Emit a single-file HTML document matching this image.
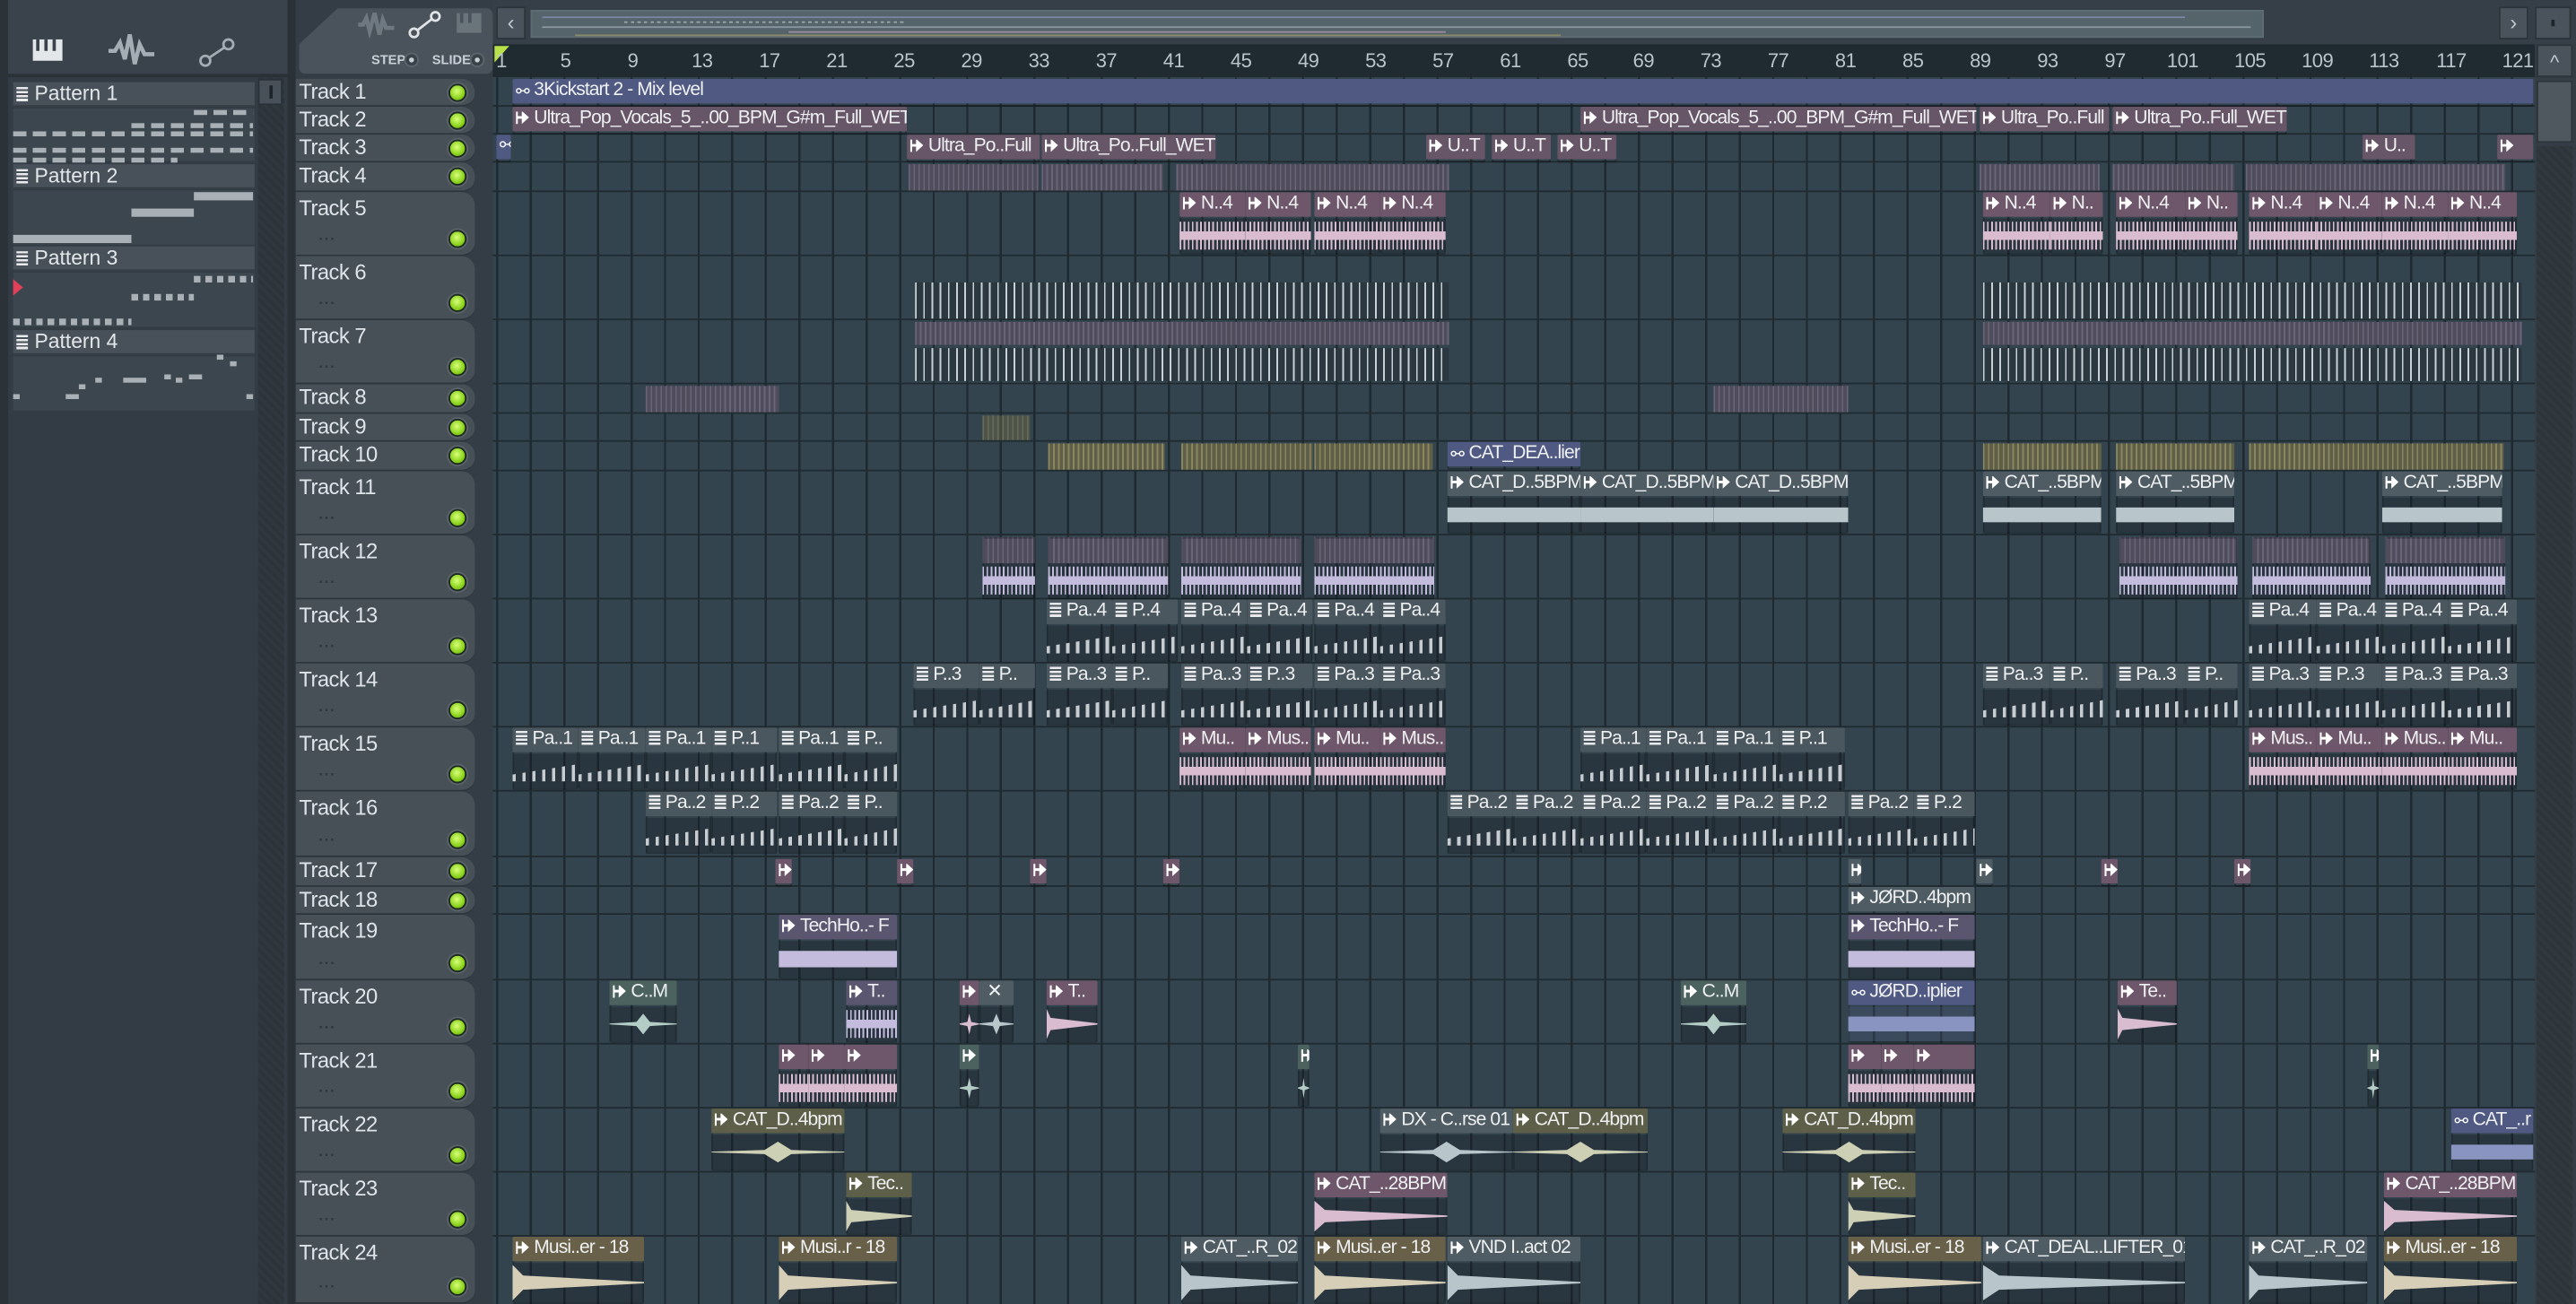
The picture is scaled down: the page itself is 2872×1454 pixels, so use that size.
<!DOCTYPE html>
<html><head><meta charset="utf-8">
<style>
*{margin:0;padding:0;box-sizing:border-box}
html,body{width:2872px;height:1454px;overflow:hidden;background:#343d45}
#w{position:absolute;left:0;top:0;width:1568px;height:794px;transform:scale(1.83163,1.8312);transform-origin:0 0;font-family:"Liberation Sans Narrow","Liberation Sans",sans-serif;background:#343d45;overflow:hidden}
.a{position:absolute}
#grid{position:absolute;left:300px;top:47px;width:1243px;height:747px;background:#33444e}
#vl{position:absolute;left:2px;top:0;right:0;bottom:0;background:repeating-linear-gradient(90deg,#1e2930 0 1.3px,transparent 1.3px 20.44px)}
.hl{position:absolute;left:300px;width:1243px;height:1px;background:#202a31}
.th{position:absolute;left:180px;width:109px;background:#474f57;border-radius:0 8px 8px 0;border-bottom:1px solid #2e363d;color:#dfe4e8;font-size:13px;letter-spacing:-0.3px;padding-left:2px;line-height:15px}
.th .led{position:absolute;right:5px;width:11px;height:11px;border-radius:50%;background:radial-gradient(circle at 45% 40%,#d8ff7a,#8ad21c 60%,#5a9a10);border:1.5px solid #1f2a20;box-shadow:0 0 0 1px #5b646b}
.th.s .led{top:3px}
.th.t .led{bottom:4px}
.th.t::after{content:"...";position:absolute;left:14px;bottom:2px;font-size:9px;color:#2e363c;letter-spacing:1px;font-weight:bold}
.c{position:absolute;overflow:hidden;border-radius:1px;--h:#4d5a62;--w:#b5c3c8;box-shadow:inset 0 0 0 1px rgba(0,0,0,.25)}
.c i{display:block;height:15px;background:var(--h);color:#eef0f2;font-style:normal;font-size:11.5px;letter-spacing:-0.5px;line-height:15px;white-space:nowrap;padding-left:2px;overflow:hidden}
.c i::before{content:"";display:inline-block;width:8px;height:8px;margin-right:3px;background:#fff;vertical-align:-0.5px;clip-path:polygon(0 0,15% 0,15% 40%,45% 40%,45% 0,100% 50%,45% 100%,45% 60%,15% 60%,15% 100%,0 100%)}
.c.p i::before{width:7px;height:9px;background:repeating-linear-gradient(#e8eaec 0 1.4px,transparent 1.4px 2.4px);clip-path:none;vertical-align:-1px}
.c.au i::before{content:"⚯";background:none;clip-path:none;width:10px;height:auto;font-size:10px;margin-right:1px;color:#fff}
.c.n i::before{content:none}
.c b{position:absolute;left:0;right:0;top:16px;bottom:1px;background:rgba(22,30,36,.35)}
.c b::after{content:"";position:absolute;left:0;right:0;top:28%;bottom:28%;background:var(--w)}
.c.d b::after{top:5%;bottom:5%;clip-path:polygon(0 0,8% 30%,100% 48%,100% 52%,8% 70%,0 100%)}
.c.sp b::after{top:10%;bottom:10%;background:linear-gradient(transparent 35%,var(--w) 35% 65%,transparent 65%),repeating-linear-gradient(90deg,var(--w) 0 1px,transparent 1px 2.5px)}
.c.m b::after{top:20%;bottom:20%;clip-path:polygon(0 48%,40% 40%,50% 0,60% 40%,100% 48%,100% 52%,60% 60%,50% 100%,40% 60%,0 52%)}
.c.s{height:17px}
.c.t{height:38px}
.blue{--h:#4f5982;--w:#8a94c0}
.pur{--h:#665668;--w:#9d8aa0}
.pink{--h:#6f576b;--w:#d9bcd0}
.grey{--h:#4f5c63;--w:#b8c6cb}
.pat{--h:#4b575f;--w:#c0c8cc}
.olive{--h:#5d5f48;--w:#cdd0b4}
.brown{--h:#686048;--w:#d6ceb6}
.gg{--h:#4c625e;--w:#b4ccc6}
.lil{--h:#5a5670;--w:#c4bcdc}
.pat b::after{top:30%;bottom:20%;background:repeating-linear-gradient(90deg,#c6ccd0 0 2px,transparent 2px 6px);clip-path:polygon(0 60%,100% 0,100% 100%,0 100%)}
.bar{position:absolute;height:16px}
.stp{background:repeating-linear-gradient(90deg,#6a6478 0 1px,#4f4d5c 1px 3px)}
.ylw{background:repeating-linear-gradient(90deg,#8a8660 0 1px,#5f5f48 1px 3px)}
.spk{background:repeating-linear-gradient(90deg,#c8d0d6 0 1px,transparent 1px 5px),#2b3840}
.pl{position:absolute;left:8px;width:147px;background:#48515a;height:15px;color:#e3e7ea;font-size:12.5px;line-height:15px;padding-left:13px;border-bottom:1px solid #363e45}
.pl::before{content:"";position:absolute;left:2px;top:3px;width:7px;height:9px;background:repeating-linear-gradient(#e8eaec 0 1.4px,transparent 1.4px 2.4px)}
.pv{position:absolute;left:8px;width:147px;background:#3c464e}
.nt{position:absolute;height:2.5px;background:#a9b1b7}
.rn{position:absolute;color:#b9c4cb;font-size:12px;top:30px;letter-spacing:-0.3px}
</style></head><body><div id="w">

<div class="a" style="left:0;top:0;width:176px;height:794px;background:#333c44"></div>
<div class="a" style="left:0;top:0;width:5px;height:794px;background:#2b3339"></div>
<div class="a" style="left:5px;top:0;width:170px;height:46px;background:#3a434b"></div>
<div class="a" style="left:5px;top:45px;width:170px;height:2px;background:#2a3238"></div>
<div class="a" style="left:20px;top:24px;width:18px;height:13px;background:#e4e7ea"></div>
<div class="a" style="left:22px;top:24px;width:2px;height:7px;background:#3a434b"></div>
<div class="a" style="left:27px;top:24px;width:2px;height:7px;background:#3a434b"></div>
<div class="a" style="left:32px;top:24px;width:2px;height:7px;background:#3a434b"></div>
<svg class="a" style="left:66px;top:20px" width="28" height="22"><path d="M0 11h4l3-5 3 10 3-15 3 18 3-12 3 6h6" stroke="#a4adb4" stroke-width="2.5" fill="none"/></svg>
<svg class="a" style="left:120px;top:22px" width="24" height="20"><circle cx="5" cy="15" r="3" stroke="#a4adb4" stroke-width="1.5" fill="none"/><circle cx="19" cy="5" r="3" stroke="#a4adb4" stroke-width="1.5" fill="none"/><path d="M7.5 13L16.5 7" stroke="#a4adb4" stroke-width="1.5"/></svg>

<div class="pl" style="top:50px">Pattern 1</div>
<div class="pv" style="top:66px;height:32px"></div>
<div class="nt" style="left:118px;top:67px;width:36px;background:repeating-linear-gradient(90deg,#a9b1b7 0 8px,transparent 8px 12px)"></div>
<div class="nt" style="left:80px;top:75px;width:74px;background:repeating-linear-gradient(90deg,#a9b1b7 0 8px,transparent 8px 12px)"></div>
<div class="nt" style="left:8px;top:80px;width:146px;background:repeating-linear-gradient(90deg,#a9b1b7 0 8px,transparent 8px 12px)"></div>
<div class="nt" style="left:8px;top:90px;width:146px;background:repeating-linear-gradient(90deg,#a9b1b7 0 8px,transparent 8px 12px)"></div>
<div class="nt" style="left:8px;top:96px;width:100px;background:repeating-linear-gradient(90deg,#a9b1b7 0 8px,transparent 8px 12px)"></div>
<div class="pl" style="top:100px">Pattern 2</div>
<div class="pv" style="top:116px;height:33px"></div>
<div class="nt" style="left:118px;top:117px;width:36px;height:5px"></div>
<div class="nt" style="left:80px;top:127px;width:38px;height:5px"></div>
<div class="nt" style="left:8px;top:143px;width:72px;height:5px"></div>
<div class="pl" style="top:150px">Pattern 3</div>
<div class="pv" style="top:166px;height:33px"></div>
<div class="nt" style="left:118px;top:168px;width:36px;height:4px;background:repeating-linear-gradient(90deg,#a9b1b7 0 4px,transparent 4px 7px)"></div>
<div class="nt" style="left:80px;top:179px;width:38px;height:4px;background:repeating-linear-gradient(90deg,#a9b1b7 0 4px,transparent 4px 7px)"></div>
<div class="nt" style="left:8px;top:194px;width:72px;height:4px;background:repeating-linear-gradient(90deg,#a9b1b7 0 4px,transparent 4px 7px)"></div>
<div class="a" style="left:8px;top:170px;width:0;height:0;border-left:6px solid #e0405a;border-top:5px solid transparent;border-bottom:5px solid transparent"></div>
<div class="pl" style="top:201px">Pattern 4</div>
<div class="pv" style="top:217px;height:33px"></div>
<div class="nt" style="left:132px;top:216px;width:4px;height:3px"></div>
<div class="nt" style="left:140px;top:220px;width:4px;height:3px"></div>
<div class="nt" style="left:100px;top:228px;width:4px;height:3px"></div>
<div class="nt" style="left:115px;top:228px;width:8px;height:3px"></div>
<div class="nt" style="left:58px;top:230px;width:4px;height:3px"></div>
<div class="nt" style="left:75px;top:230px;width:14px;height:3px"></div>
<div class="nt" style="left:107px;top:230px;width:4px;height:3px"></div>
<div class="nt" style="left:48px;top:234px;width:4px;height:3px"></div>
<div class="nt" style="left:8px;top:240px;width:4px;height:3px"></div>
<div class="nt" style="left:40px;top:240px;width:8px;height:3px"></div>
<div class="nt" style="left:150px;top:240px;width:4px;height:3px"></div>
<div class="a" style="left:157px;top:47px;width:16px;height:747px;background:repeating-linear-gradient(45deg,#2c343a 0 2px,#30383f 2px 4px)"></div>
<div class="a" style="left:157px;top:48px;width:15px;height:16px;background:#48515a;border:1px solid #2a3238"></div>
<div class="a" style="left:164px;top:52px;width:2px;height:8px;background:#1e252a"></div>
<div class="a" style="left:175px;top:0;width:5px;height:794px;background:#2a3238"></div>

<div class="a" style="left:180px;top:0;width:120px;height:47px;background:#343d45"></div>
<div class="a" style="left:182px;top:5px;width:118px;height:40px;background:#4a535b;clip-path:polygon(20% 0,100% 0,100% 100%,0 100%,0 55%);border-radius:4px"></div>
<svg class="a" style="left:218px;top:7px" width="22" height="16"><path d="M0 8h3l2-4 2 8 3-11 3 13 2-9 2 5h5" stroke="#6e787f" stroke-width="2.5" fill="none"/></svg>
<svg class="a" style="left:248px;top:6px" width="22" height="18"><circle cx="4" cy="14" r="2.6" stroke="#e0e4e7" stroke-width="1.5" fill="none"/><circle cx="17" cy="4" r="2.6" stroke="#e0e4e7" stroke-width="1.5" fill="none"/><path d="M6 12.5L15 5.5" stroke="#e0e4e7" stroke-width="1.5"/></svg>
<div class="a" style="left:278px;top:8px;width:15px;height:12px;background:#6a747b"></div>
<div class="a" style="left:280px;top:8px;width:2px;height:6px;background:#4a535b"></div>
<div class="a" style="left:285px;top:8px;width:2px;height:6px;background:#4a535b"></div>
<div class="a" style="left:226px;top:32px;color:#c8d0d6;font-size:8px;font-weight:bold">STEP</div>
<div class="a" style="left:246px;top:32px;width:9px;height:9px;border-radius:50%;background:#3a4249;border:1.5px solid #5c656c"></div>
<div class="a" style="left:249px;top:35px;width:3px;height:3px;border-radius:50%;background:#c8d0d6"></div>
<div class="a" style="left:263px;top:32px;color:#c8d0d6;font-size:8px;font-weight:bold">SLIDE</div>
<div class="a" style="left:286px;top:32px;width:9px;height:9px;border-radius:50%;background:#3a4249;border:1.5px solid #5c656c"></div>
<div class="a" style="left:289px;top:35px;width:3px;height:3px;border-radius:50%;background:#c8d0d6"></div>

<div class="a" style="left:300px;top:0;width:1268px;height:27px;background:#363f47"></div>
<div class="a" style="left:302px;top:4px;width:18px;height:20px;background:#4a535b;border:1px solid #2c343a;color:#c0c8ce;font-size:13px;text-align:center;line-height:18px">‹</div>
<div class="a" style="left:323px;top:6px;width:1055px;height:17px;background:#55636a;border:1px solid #5e6d74"></div>
<div class="a" style="left:330px;top:10px;width:1000px;height:1px;background:#7a86a8"></div>
<div class="a" style="left:380px;top:13px;width:170px;height:1px;background:repeating-linear-gradient(90deg,#9aa4aa 0 2px,transparent 2px 4px)"></div>
<div class="a" style="left:330px;top:16px;width:1040px;height:1px;background:#8a96a0"></div>
<div class="a" style="left:480px;top:19px;width:400px;height:1px;background:#9a8aa0"></div>
<div class="a" style="left:350px;top:21px;width:600px;height:1px;background:#8a8a68"></div>
<div class="a" style="left:1521px;top:4px;width:18px;height:20px;background:#4a535b;border:1px solid #2c343a;color:#c0c8ce;font-size:13px;text-align:center;line-height:18px">›</div>
<div class="a" style="left:1543px;top:4px;width:22px;height:20px;background:#4a535b;border:1px solid #2c343a"></div>
<div class="a" style="left:1553px;top:12px;width:2px;height:4px;background:#1e252a"></div>

<div class="a" style="left:300px;top:27px;width:1243px;height:20px;background:#1f2a31"></div>
<div class="a" style="left:301px;top:28px;width:0;height:0;border-top:10px solid #b8e04a;border-right:9px solid transparent"></div>
<div class="rn" style="left:302px">1</div>
<div class="rn" style="left:341px">5</div>
<div class="rn" style="left:382px">9</div>
<div class="rn" style="left:421px">13</div>
<div class="rn" style="left:462px">17</div>
<div class="rn" style="left:503px">21</div>
<div class="rn" style="left:544px">25</div>
<div class="rn" style="left:585px">29</div>
<div class="rn" style="left:626px">33</div>
<div class="rn" style="left:667px">37</div>
<div class="rn" style="left:708px">41</div>
<div class="rn" style="left:749px">45</div>
<div class="rn" style="left:790px">49</div>
<div class="rn" style="left:831px">53</div>
<div class="rn" style="left:872px">57</div>
<div class="rn" style="left:913px">61</div>
<div class="rn" style="left:954px">65</div>
<div class="rn" style="left:994px">69</div>
<div class="rn" style="left:1035px">73</div>
<div class="rn" style="left:1076px">77</div>
<div class="rn" style="left:1117px">81</div>
<div class="rn" style="left:1158px">85</div>
<div class="rn" style="left:1199px">89</div>
<div class="rn" style="left:1240px">93</div>
<div class="rn" style="left:1281px">97</div>
<div class="rn" style="left:1319px">101</div>
<div class="rn" style="left:1360px">105</div>
<div class="rn" style="left:1401px">109</div>
<div class="rn" style="left:1442px">113</div>
<div class="rn" style="left:1483px">117</div>
<div class="rn" style="left:1523px">121</div>

<div class="a" style="left:1543px;top:27px;width:25px;height:767px;background:#343d45"></div>
<div class="a" style="left:1544px;top:27px;width:22px;height:20px;background:#4a535b;border:1px solid #2c343a;color:#c0c8ce;font-size:12px;text-align:center;line-height:20px">^</div>
<div class="a" style="left:1544px;top:49px;width:22px;height:38px;background:#4f585f;border:1px solid #2c343a"></div>
<div class="a" style="left:1544px;top:89px;width:22px;height:705px;background:repeating-linear-gradient(45deg,#2d353b 0 2px,#31393f 2px 4px)"></div>

<div id="grid"><div id="vl"></div></div>
<div class="hl" style="top:64px"></div><div class="hl" style="top:81px"></div><div class="hl" style="top:98px"></div><div class="hl" style="top:116px"></div><div class="hl" style="top:155px"></div><div class="hl" style="top:194px"></div><div class="hl" style="top:233px"></div><div class="hl" style="top:251px"></div><div class="hl" style="top:268px"></div><div class="hl" style="top:286px"></div><div class="hl" style="top:325px"></div><div class="hl" style="top:364px"></div><div class="hl" style="top:403px"></div><div class="hl" style="top:442px"></div><div class="hl" style="top:481px"></div><div class="hl" style="top:521px"></div><div class="hl" style="top:539px"></div><div class="hl" style="top:556px"></div><div class="hl" style="top:596px"></div><div class="hl" style="top:635px"></div><div class="hl" style="top:674px"></div><div class="hl" style="top:713px"></div><div class="hl" style="top:752px"></div>

<div class="th s" style="top:48px;height:17px">Track 1<span class="led"></span></div>
<div class="th s" style="top:65px;height:17px">Track 2<span class="led"></span></div>
<div class="th s" style="top:82px;height:17px">Track 3<span class="led"></span></div>
<div class="th s" style="top:99px;height:18px">Track 4<span class="led"></span></div>
<div class="th t" style="top:117px;height:39px;line-height:19px">Track 5<span class="led"></span></div>
<div class="th t" style="top:156px;height:39px;line-height:19px">Track 6<span class="led"></span></div>
<div class="th t" style="top:195px;height:39px;line-height:19px">Track 7<span class="led"></span></div>
<div class="th s" style="top:234px;height:18px">Track 8<span class="led"></span></div>
<div class="th s" style="top:252px;height:17px">Track 9<span class="led"></span></div>
<div class="th s" style="top:269px;height:18px">Track 10<span class="led"></span></div>
<div class="th t" style="top:287px;height:39px;line-height:19px">Track 11<span class="led"></span></div>
<div class="th t" style="top:326px;height:39px;line-height:19px">Track 12<span class="led"></span></div>
<div class="th t" style="top:365px;height:39px;line-height:19px">Track 13<span class="led"></span></div>
<div class="th t" style="top:404px;height:39px;line-height:19px">Track 14<span class="led"></span></div>
<div class="th t" style="top:443px;height:39px;line-height:19px">Track 15<span class="led"></span></div>
<div class="th t" style="top:482px;height:40px;line-height:19px">Track 16<span class="led"></span></div>
<div class="th s" style="top:522px;height:18px">Track 17<span class="led"></span></div>
<div class="th s" style="top:540px;height:17px">Track 18<span class="led"></span></div>
<div class="th t" style="top:557px;height:40px;line-height:19px">Track 19<span class="led"></span></div>
<div class="th t" style="top:597px;height:39px;line-height:19px">Track 20<span class="led"></span></div>
<div class="th t" style="top:636px;height:39px;line-height:19px">Track 21<span class="led"></span></div>
<div class="th t" style="top:675px;height:39px;line-height:19px">Track 22<span class="led"></span></div>
<div class="th t" style="top:714px;height:39px;line-height:19px">Track 23<span class="led"></span></div>
<div class="th t" style="top:753px;height:41px;line-height:19px">Track 24<span class="led"></span></div>

<div class="c blue au s" style="left:312px;top:48px;width:1230px"><i>3Kickstart 2 - Mix level</i></div>
<div class="c pur s" style="left:312px;top:65px;width:240px"><i>Ultra_Pop_Vocals_5_..00_BPM_G#m_Full_WET</i></div>
<div class="c pur s" style="left:962px;top:65px;width:241px"><i>Ultra_Pop_Vocals_5_..00_BPM_G#m_Full_WET</i></div>
<div class="c pur s" style="left:1205px;top:65px;width:79px"><i>Ultra_Po..Full</i></div>
<div class="c pur s" style="left:1286px;top:65px;width:106px"><i>Ultra_Po..Full_WET</i></div>
<div class="c blue au n s" style="left:302px;top:82px;width:9px"><i>⚯</i></div>
<div class="c pur s" style="left:552px;top:82px;width:81px"><i>Ultra_Po..Full</i></div>
<div class="c pur s" style="left:634px;top:82px;width:106px"><i>Ultra_Po..Full_WET</i></div>
<div class="c pur s" style="left:868px;top:82px;width:36px"><i>U..T</i></div>
<div class="c pur s" style="left:908px;top:82px;width:36px"><i>U..T</i></div>
<div class="c pur s" style="left:948px;top:82px;width:36px"><i>U..T</i></div>
<div class="c pur s" style="left:1438px;top:82px;width:32px"><i>U..</i></div>
<div class="c pur s" style="left:1520px;top:82px;width:22px"><i></i></div>
<div class="bar stp" style="left:553px;top:100px;width:79px"></div>
<div class="bar stp" style="left:634px;top:100px;width:74px"></div>
<div class="bar stp" style="left:716px;top:100px;width:166px"></div>
<div class="bar stp" style="left:1205px;top:100px;width:73px"></div>
<div class="bar stp" style="left:1286px;top:100px;width:74px"></div>
<div class="bar stp" style="left:1367px;top:100px;width:158px"></div>
<div class="c pink sp t" style="left:718px;top:117px;width:40px"><i>N..4</i><b></b></div>
<div class="c pink sp t" style="left:758px;top:117px;width:40px"><i>N..4</i><b></b></div>
<div class="c pink sp t" style="left:800px;top:117px;width:40px"><i>N..4</i><b></b></div>
<div class="c pink sp t" style="left:840px;top:117px;width:40px"><i>N..4</i><b></b></div>
<div class="c pink sp t" style="left:1207px;top:117px;width:41px"><i>N..4</i><b></b></div>
<div class="c pink sp t" style="left:1248px;top:117px;width:32px"><i>N..</i><b></b></div>
<div class="c pink sp t" style="left:1288px;top:117px;width:42px"><i>N..4</i><b></b></div>
<div class="c pink sp t" style="left:1330px;top:117px;width:32px"><i>N..</i><b></b></div>
<div class="c pink sp t" style="left:1369px;top:117px;width:41px"><i>N..4</i><b></b></div>
<div class="c pink sp t" style="left:1410px;top:117px;width:40px"><i>N..4</i><b></b></div>
<div class="c pink sp t" style="left:1450px;top:117px;width:40px"><i>N..4</i><b></b></div>
<div class="c pink sp t" style="left:1490px;top:117px;width:42px"><i>N..4</i><b></b></div>
<div class="bar spk" style="left:557px;top:172px;width:325px;height:22px"></div>
<div class="bar spk" style="left:1207px;top:172px;width:328px;height:22px"></div>
<div class="bar stp" style="left:557px;top:196px;width:325px;height:14px"></div>
<div class="bar spk" style="left:557px;top:212px;width:325px;height:20px"></div>
<div class="bar stp" style="left:1207px;top:196px;width:328px;height:14px"></div>
<div class="bar spk" style="left:1207px;top:212px;width:328px;height:20px"></div>
<div class="bar stp" style="left:393px;top:235px;width:81px"></div>
<div class="bar stp" style="left:1043px;top:235px;width:82px"></div>
<div class="bar ylw" style="left:598px;top:253px;width:29px;height:15px;opacity:.6"></div>
<div class="bar ylw" style="left:638px;top:270px;width:71px"></div>
<div class="bar ylw" style="left:719px;top:270px;width:80px"></div>
<div class="bar ylw" style="left:800px;top:270px;width:72px"></div>
<div class="c blue au s" style="left:881px;top:269px;width:81px"><i>CAT_DEA..lier</i></div>
<div class="bar ylw" style="left:1207px;top:270px;width:72px"></div>
<div class="bar ylw" style="left:1288px;top:270px;width:72px"></div>
<div class="bar ylw" style="left:1369px;top:270px;width:155px"></div>
<div class="c grey t" style="left:881px;top:287px;width:81px"><i>CAT_D..5BPM</i><b></b></div>
<div class="c grey t" style="left:962px;top:287px;width:81px"><i>CAT_D..5BPM</i><b></b></div>
<div class="c grey t" style="left:1043px;top:287px;width:82px"><i>CAT_D..5BPM</i><b></b></div>
<div class="c grey t" style="left:1207px;top:287px;width:72px"><i>CAT_..5BPM</i><b></b></div>
<div class="c grey t" style="left:1288px;top:287px;width:72px"><i>CAT_..5BPM</i><b></b></div>
<div class="c grey t" style="left:1450px;top:287px;width:73px"><i>CAT_..5BPM</i><b></b></div>
<div class="bar stp" style="left:598px;top:327px;width:32px"></div><div class="c lil sp n t" style="left:598px;top:327px;width:32px;background:none"><i style="background:none"></i><b></b></div>
<div class="bar stp" style="left:638px;top:327px;width:73px"></div><div class="c lil sp n t" style="left:638px;top:327px;width:73px"><i style="background:none"></i><b></b></div>
<div class="bar stp" style="left:719px;top:327px;width:73px"></div><div class="c lil sp n t" style="left:719px;top:327px;width:73px"><i style="background:none"></i><b></b></div>
<div class="bar stp" style="left:800px;top:327px;width:73px"></div><div class="c lil sp n t" style="left:800px;top:327px;width:73px"><i style="background:none"></i><b></b></div>
<div class="bar stp" style="left:1290px;top:327px;width:72px"></div><div class="c lil sp n t" style="left:1290px;top:327px;width:72px"><i style="background:none"></i><b></b></div>
<div class="bar stp" style="left:1371px;top:327px;width:72px"></div><div class="c lil sp n t" style="left:1371px;top:327px;width:72px"><i style="background:none"></i><b></b></div>
<div class="bar stp" style="left:1452px;top:327px;width:73px"></div><div class="c lil sp n t" style="left:1452px;top:327px;width:73px"><i style="background:none"></i><b></b></div>
<div class="c pat p t" style="left:637px;top:365px;width:40px"><i>Pa..4</i><b></b></div>
<div class="c pat p t" style="left:677px;top:365px;width:40px"><i>P..4</i><b></b></div>
<div class="c pat p t" style="left:719px;top:365px;width:40px"><i>Pa..4</i><b></b></div>
<div class="c pat p t" style="left:759px;top:365px;width:40px"><i>Pa..4</i><b></b></div>
<div class="c pat p t" style="left:800px;top:365px;width:40px"><i>Pa..4</i><b></b></div>
<div class="c pat p t" style="left:840px;top:365px;width:40px"><i>Pa..4</i><b></b></div>
<div class="c pat p t" style="left:1369px;top:365px;width:41px"><i>Pa..4</i><b></b></div>
<div class="c pat p t" style="left:1410px;top:365px;width:40px"><i>Pa..4</i><b></b></div>
<div class="c pat p t" style="left:1450px;top:365px;width:40px"><i>Pa..4</i><b></b></div>
<div class="c pat p t" style="left:1490px;top:365px;width:42px"><i>Pa..4</i><b></b></div>
<div class="c pat p t" style="left:556px;top:404px;width:40px"><i>P..3</i><b></b></div>
<div class="c pat p t" style="left:596px;top:404px;width:34px"><i>P..</i><b></b></div>
<div class="c pat p t" style="left:637px;top:404px;width:40px"><i>Pa..3</i><b></b></div>
<div class="c pat p t" style="left:677px;top:404px;width:34px"><i>P..</i><b></b></div>
<div class="c pat p t" style="left:719px;top:404px;width:40px"><i>Pa..3</i><b></b></div>
<div class="c pat p t" style="left:759px;top:404px;width:40px"><i>P..3</i><b></b></div>
<div class="c pat p t" style="left:800px;top:404px;width:40px"><i>Pa..3</i><b></b></div>
<div class="c pat p t" style="left:840px;top:404px;width:40px"><i>Pa..3</i><b></b></div>
<div class="c pat p t" style="left:1207px;top:404px;width:41px"><i>Pa..3</i><b></b></div>
<div class="c pat p t" style="left:1248px;top:404px;width:32px"><i>P..</i><b></b></div>
<div class="c pat p t" style="left:1288px;top:404px;width:42px"><i>Pa..3</i><b></b></div>
<div class="c pat p t" style="left:1330px;top:404px;width:32px"><i>P..</i><b></b></div>
<div class="c pat p t" style="left:1369px;top:404px;width:41px"><i>Pa..3</i><b></b></div>
<div class="c pat p t" style="left:1410px;top:404px;width:40px"><i>P..3</i><b></b></div>
<div class="c pat p t" style="left:1450px;top:404px;width:40px"><i>Pa..3</i><b></b></div>
<div class="c pat p t" style="left:1490px;top:404px;width:42px"><i>Pa..3</i><b></b></div>
<div class="c pat p t" style="left:312px;top:443px;width:40px"><i>Pa..1</i><b></b></div>
<div class="c pat p t" style="left:352px;top:443px;width:41px"><i>Pa..1</i><b></b></div>
<div class="c pat p t" style="left:393px;top:443px;width:40px"><i>Pa..1</i><b></b></div>
<div class="c pat p t" style="left:433px;top:443px;width:40px"><i>P..1</i><b></b></div>
<div class="c pat p t" style="left:474px;top:443px;width:40px"><i>Pa..1</i><b></b></div>
<div class="c pat p t" style="left:514px;top:443px;width:32px"><i>P..</i><b></b></div>
<div class="c pink sp t" style="left:718px;top:443px;width:40px"><i>Mu..</i><b></b></div>
<div class="c pink sp t" style="left:758px;top:443px;width:40px"><i>Mus..</i><b></b></div>
<div class="c pink sp t" style="left:800px;top:443px;width:40px"><i>Mu..</i><b></b></div>
<div class="c pink sp t" style="left:840px;top:443px;width:40px"><i>Mus..</i><b></b></div>
<div class="c pat p t" style="left:962px;top:443px;width:40px"><i>Pa..1</i><b></b></div>
<div class="c pat p t" style="left:1002px;top:443px;width:41px"><i>Pa..1</i><b></b></div>
<div class="c pat p t" style="left:1043px;top:443px;width:40px"><i>Pa..1</i><b></b></div>
<div class="c pat p t" style="left:1083px;top:443px;width:40px"><i>P..1</i><b></b></div>
<div class="c pink sp t" style="left:1369px;top:443px;width:41px"><i>Mus..</i><b></b></div>
<div class="c pink sp t" style="left:1410px;top:443px;width:40px"><i>Mu..</i><b></b></div>
<div class="c pink sp t" style="left:1450px;top:443px;width:40px"><i>Mus..</i><b></b></div>
<div class="c pink sp t" style="left:1490px;top:443px;width:42px"><i>Mu..</i><b></b></div>
<div class="c pat p t" style="left:393px;top:482px;width:40px"><i>Pa..2</i><b></b></div>
<div class="c pat p t" style="left:433px;top:482px;width:40px"><i>P..2</i><b></b></div>
<div class="c pat p t" style="left:474px;top:482px;width:40px"><i>Pa..2</i><b></b></div>
<div class="c pat p t" style="left:514px;top:482px;width:32px"><i>P..</i><b></b></div>
<div class="c pat p t" style="left:881px;top:482px;width:40px"><i>Pa..2</i><b></b></div>
<div class="c pat p t" style="left:921px;top:482px;width:41px"><i>Pa..2</i><b></b></div>
<div class="c pat p t" style="left:962px;top:482px;width:40px"><i>Pa..2</i><b></b></div>
<div class="c pat p t" style="left:1002px;top:482px;width:41px"><i>Pa..2</i><b></b></div>
<div class="c pat p t" style="left:1043px;top:482px;width:40px"><i>Pa..2</i><b></b></div>
<div class="c pat p t" style="left:1083px;top:482px;width:40px"><i>P..2</i><b></b></div>
<div class="c pat p t" style="left:1125px;top:482px;width:40px"><i>Pa..2</i><b></b></div>
<div class="c pat p t" style="left:1165px;top:482px;width:37px"><i>P..2</i><b></b></div>
<div class="c pink s" style="left:472px;top:523px;width:10px"><i></i></div>
<div class="c pink s" style="left:546px;top:523px;width:10px"><i></i></div>
<div class="c pink s" style="left:627px;top:523px;width:10px"><i></i></div>
<div class="c pink s" style="left:708px;top:523px;width:10px"><i></i></div>
<div class="c grey s" style="left:1125px;top:523px;width:8px"><i></i></div>
<div class="c grey s" style="left:1203px;top:523px;width:10px"><i></i></div>
<div class="c pink s" style="left:1279px;top:523px;width:10px"><i></i></div>
<div class="c pink s" style="left:1360px;top:523px;width:10px"><i></i></div>
<div class="c grey s" style="left:1125px;top:540px;width:77px"><i>JØRD..4bpm</i></div>
<div class="c lil t" style="left:474px;top:557px;width:72px;height:39px"><i>TechHo..- F</i><b></b></div>
<div class="c lil t" style="left:1125px;top:557px;width:77px;height:39px"><i>TechHo..- F</i><b></b></div>
<div class="c gg m t" style="left:371px;top:597px;width:41px"><i>C..M</i><b></b></div>
<div class="c lil sp t" style="left:515px;top:597px;width:31px"><i>T..</i><b></b></div>
<div class="c pink m t" style="left:584px;top:597px;width:12px"><i></i><b></b></div>
<div class="c grey n m t" style="left:596px;top:597px;width:21px"><i>&nbsp;✕</i><b></b></div>
<div class="c pink d t" style="left:637px;top:597px;width:31px"><i>T..</i><b></b></div>
<div class="c gg m t" style="left:1023px;top:597px;width:40px"><i>C..M</i><b></b></div>
<div class="c blue au t" style="left:1125px;top:597px;width:77px"><i>JØRD..iplier</i><b style="background:rgba(80,90,130,.3)"></b></div>
<div class="c pink d t" style="left:1289px;top:597px;width:36px"><i>Te..</i><b></b></div>
<div class="c pink sp t" style="left:474px;top:636px;width:18px"><i></i><b></b></div>
<div class="c pink sp t" style="left:492px;top:636px;width:22px"><i></i><b></b></div>
<div class="c pink sp t" style="left:514px;top:636px;width:32px"><i></i><b></b></div>
<div class="c gg m t" style="left:584px;top:636px;width:12px"><i></i><b></b></div>
<div class="c gg m t" style="left:790px;top:636px;width:7px"><i></i><b></b></div>
<div class="c pink sp t" style="left:1125px;top:636px;width:20px"><i></i><b></b></div>
<div class="c pink sp t" style="left:1145px;top:636px;width:20px"><i></i><b></b></div>
<div class="c pink sp t" style="left:1165px;top:636px;width:37px"><i></i><b></b></div>
<div class="c gg m t" style="left:1441px;top:636px;width:7px"><i></i><b></b></div>
<div class="c olive m t" style="left:433px;top:675px;width:81px"><i>CAT_D..4bpm</i><b></b></div>
<div class="c grey m t" style="left:840px;top:675px;width:81px"><i>DX - C..rse 01</i><b></b></div>
<div class="c olive m t" style="left:921px;top:675px;width:82px"><i>CAT_D..4bpm</i><b></b></div>
<div class="c olive m t" style="left:1085px;top:675px;width:81px"><i>CAT_D..4bpm</i><b></b></div>
<div class="c blue au t" style="left:1492px;top:675px;width:50px"><i>CAT_..r</i><b></b></div>
<div class="c olive d t" style="left:515px;top:714px;width:40px"><i>Tec..</i><b></b></div>
<div class="c pink d t" style="left:800px;top:714px;width:81px"><i>CAT_..28BPM</i><b></b></div>
<div class="c olive d t" style="left:1125px;top:714px;width:41px"><i>Tec..</i><b></b></div>
<div class="c pink d t" style="left:1451px;top:714px;width:81px"><i>CAT_..28BPM</i><b></b></div>
<div class="c brown d t" style="left:312px;top:753px;width:80px;height:41px"><i>Musi..er - 18</i><b></b></div>
<div class="c brown d t" style="left:474px;top:753px;width:72px;height:41px"><i>Musi..r - 18</i><b></b></div>
<div class="c grey d t" style="left:719px;top:753px;width:71px;height:41px"><i>CAT_..R_02</i><b></b></div>
<div class="c brown d t" style="left:800px;top:753px;width:80px;height:41px"><i>Musi..er - 18</i><b></b></div>
<div class="c grey d t" style="left:881px;top:753px;width:81px;height:41px"><i>VND I..act 02</i><b></b></div>
<div class="c brown d t" style="left:1125px;top:753px;width:81px;height:41px"><i>Musi..er - 18</i><b></b></div>
<div class="c grey d t" style="left:1207px;top:753px;width:123px;height:41px"><i>CAT_DEAL..LIFTER_01</i><b></b></div>
<div class="c grey d t" style="left:1369px;top:753px;width:72px;height:41px"><i>CAT_..R_02</i><b></b></div>
<div class="c brown d t" style="left:1451px;top:753px;width:81px;height:41px"><i>Musi..er - 18</i><b></b></div>

</div></body></html>
